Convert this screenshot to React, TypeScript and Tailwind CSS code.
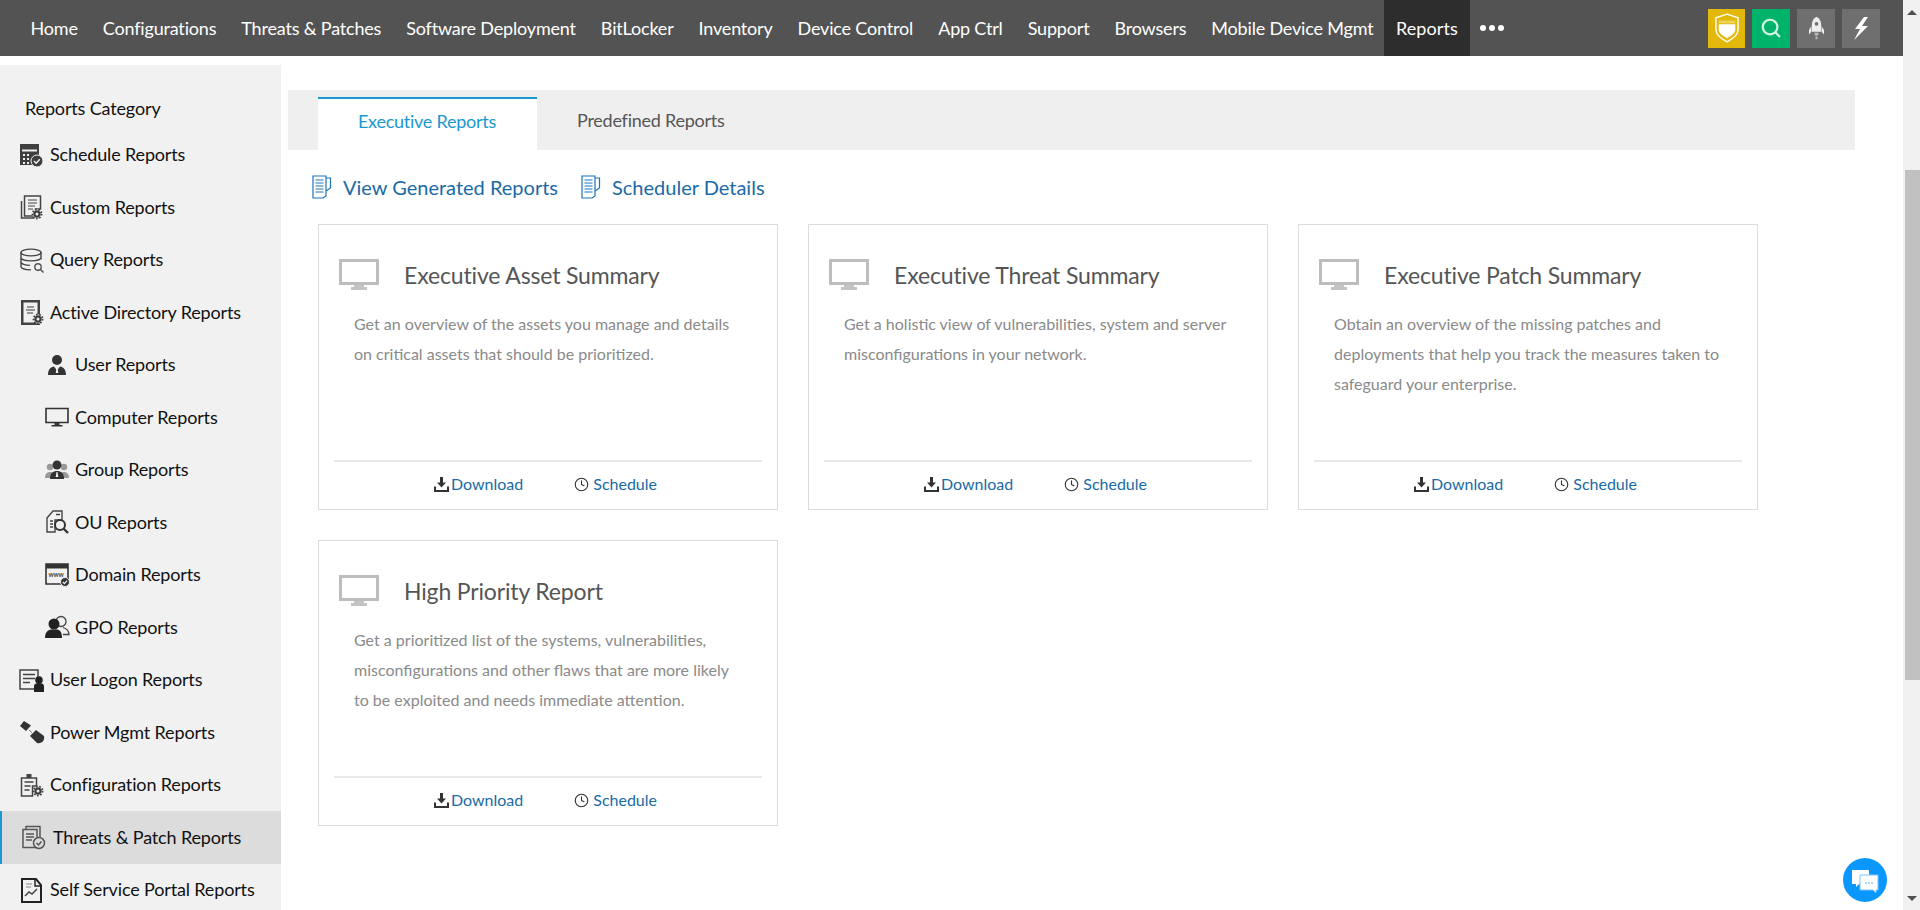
import { ReactNode } from "react";
import { Search, Clock } from "lucide-react";

const navItems = [
  "Home",
  "Configurations",
  "Threats & Patches",
  "Software Deployment",
  "BitLocker",
  "Inventory",
  "Device Control",
  "App Ctrl",
  "Support",
  "Browsers",
  "Mobile Device Mgmt",
];

const Gear = ({ x, y }: { x: number; y: number }) => (
  <g transform={`translate(${x} ${y})`}>
    <circle r="4.2" fill="#3c3c3c" stroke="#f1f1f1" strokeWidth="1" />
    <circle r="4.6" fill="none" stroke="#3c3c3c" strokeWidth="1.6" strokeDasharray="1.6 1.6" />
    <circle r="1.5" fill="#f1f1f1" />
  </g>
);

const icons: Record<string, ReactNode> = {
  schedule: (
    <>
      <path d="M0 1h19v21H0z" fill="#3f3f3f" />
      <path d="M2 6.500h15v2H2z" fill="#f1f1f1" />
      <path d="M3 11h2v2H3zM7 11h2v2H7zM3 15h2v2H3zM7 15h2v2H7zM3 19h2v2H3zM7 19h2v2H7z" fill="#f1f1f1" />
      <circle cx="17" cy="18" r="6" fill="#3f3f3f" stroke="#f1f1f1" strokeWidth="1" />
      <path d="M14 18l2.200 2.200 3.600-4" fill="none" stroke="#f1f1f1" strokeWidth="1.400" />
    </>
  ),
  custom: (
    <>
      <path d="M1.500 6v17h13" fill="none" stroke="#444" strokeWidth="1.500" />
      <path d="M4.500 1h16v13h-5v7h-11z" fill="none" stroke="#444" strokeWidth="1.500" />
      <path d="M8 5h9M8 8h9M8 11h7M8 14h5" stroke="#444" strokeWidth="1.200" />
      <Gear x={17} y={19} />
    </>
  ),
  query: (
    <>
      <ellipse cx="11" cy="4.500" rx="10" ry="3.400" fill="none" stroke="#444" strokeWidth="1.400" />
      <path d="M1 4.500v14c0 1.800 4 3.400 10 3.400M21 4.500v7M1 9.500c0 1.800 4 3.400 10 3.400s10-1.600 10-3.400M1 14c0 1.800 4 3.400 9 3.400" fill="none" stroke="#444" strokeWidth="1.400" />
      <circle cx="18" cy="19" r="3.200" fill="#f1f1f1" stroke="#555" strokeWidth="1.400" />
      <path d="M20.300 21.300l3.200 3.200" stroke="#555" strokeWidth="1.600" />
    </>
  ),
  ad: (
    <>
      <path d="M1 0h19v25H1z" fill="#444" />
      <path d="M3.500 2.500h14v20h-14z" fill="#f1f1f1" />
      <path d="M7 7h7M6 10h9M7 13h6" stroke="#777" strokeWidth="1.300" />
      <Gear x={18} y={19} />
    </>
  ),
  user: (
    <>
      <circle cx="12" cy="7" r="5" fill="#333" />
      <path d="M3 22c0-6 3-8 6-8.500l3 4 3-4c3 .5 6 2.500 6 8.500z" fill="#333" />
      <path d="M11.500 15h1l.8 5h-2.600z" fill="#f1f1f1" />
    </>
  ),
  computer: (
    <>
      <path d="M1 3.500h22v14H1z" fill="none" stroke="#333" strokeWidth="1.600" />
      <path d="M9.500 18h5v2h3v1.500h-11V20h3z" fill="#333" />
    </>
  ),
  group: (
    <>
      <circle cx="5" cy="9" r="3.200" fill="#999" />
      <circle cx="19" cy="9" r="3.200" fill="#999" />
      <path d="M0 20c0-4 2-6 5-6s5 2 5 6zM14 20c0-4 2-6 5-6s5 2 5 6z" fill="#999" />
      <circle cx="12" cy="7" r="4.500" fill="#333" />
      <path d="M5 21c0-6 3-8 7-8s7 2 7 8z" fill="#333" />
      <path d="M11.500 14h1l.8 5h-2.600z" fill="#f1f1f1" />
    </>
  ),
  ou: (
    <>
      <path d="M8 1h9v9H10v12H2V8z" fill="none" stroke="#444" strokeWidth="1.400" />
      <path d="M11 4.500h4M5 11h3M5 14h3M5 17h3" stroke="#444" strokeWidth="1.300" />
      <circle cx="15" cy="15" r="5" fill="#f1f1f1" stroke="#333" strokeWidth="2" />
      <path d="M18.500 18.500l4.500 4.500" stroke="#333" strokeWidth="2.400" />
    </>
  ),
  domain: (
    <>
      <path d="M1 1h22v20H1z" fill="none" stroke="#333" strokeWidth="1.600" />
      <path d="M1 1h22v4.500H1z" fill="#333" />
      <text x="11" y="13.500" textAnchor="middle" fontSize="6.500" fontWeight="700" fill="#444" fontFamily="Lato, sans-serif">www</text>
      <circle cx="20" cy="19" r="4.500" fill="#333" stroke="#f1f1f1" strokeWidth="1" />
      <path d="M17.800 19l1.700 1.700 2.600-3" fill="none" stroke="#f1f1f1" strokeWidth="1.200" />
    </>
  ),
  gpo: (
    <>
      <circle cx="16" cy="6.500" r="5" fill="none" stroke="#444" strokeWidth="1.300" />
      <path d="M18 12.500c3 1 6 3 6 7h-6" fill="none" stroke="#444" strokeWidth="1.300" />
      <circle cx="9" cy="9" r="5.500" fill="#222" />
      <path d="M0 23c0-6 3-8 6-8.500h6c3 .5 5 2.500 5 8.500z" fill="#222" />
    </>
  ),
  logon: (
    <>
      <path d="M0 2h18v19H0z" fill="none" stroke="#444" strokeWidth="1.500" />
      <path d="M3 6.500h12M3 10.500h12M3 14.500h7" stroke="#444" strokeWidth="1.500" />
      <circle cx="19" cy="12" r="3.800" fill="#222" />
      <path d="M14 24v-6c0-2 2-3 5-3s5 1 5 3v6z" fill="#222" />
    </>
  ),
  power: (
    <>
      <path d="M0 6l4-5 7 4.500-5 5.500z" fill="#333" />
      <path d="M10 16l6-6 8 6c1 5-3 8-7 7z" fill="#333" />
      <path d="M9 10l3 2.500" stroke="#777" strokeWidth="1" />
    </>
  ),
  config: (
    <>
      <path d="M1.500 5h15v8h-4v10h-11z" fill="none" stroke="#444" strokeWidth="1.500" />
      <path d="M6.500 5V1h5v4z" fill="#444" />
      <path d="M4.500 9h9M4.500 13h6M4.500 17h5" stroke="#444" strokeWidth="1.300" />
      <Gear x={18} y={18} />
    </>
  ),
  threats: (
    <>
      <path d="M5 4V1.500h14V12" fill="none" stroke="#555" strokeWidth="1.500" />
      <path d="M2 4.500h14v18H2z" fill="#dcdcdc" stroke="#555" strokeWidth="1.500" />
      <path d="M5 9h8M5 12h8M5 15h6" stroke="#555" strokeWidth="1.500" />
      <circle cx="18" cy="18" r="5.500" fill="#dcdcdc" stroke="#555" strokeWidth="1.500" />
      <path d="M15.500 18l2 2 3-3.500" fill="none" stroke="#555" strokeWidth="1.500" />
    </>
  ),
  portal: (
    <>
      <path d="M2 1h14l5 6v17H2z" fill="none" stroke="#222" strokeWidth="2" />
      <path d="M15 1v7h6" fill="none" stroke="#222" strokeWidth="1.500" />
      <path d="M5 18l4-4 3 2 5-5" fill="none" stroke="#444" strokeWidth="1.500" />
      <path d="M6 6h6M6 9h5" stroke="#888" strokeWidth="1.200" />
    </>
  ),
};

const sideItems = [
  { label: "Schedule Reports", icon: "schedule" },
  { label: "Custom Reports", icon: "custom" },
  { label: "Query Reports", icon: "query" },
  { label: "Active Directory Reports", icon: "ad" },
  { label: "User Reports", icon: "user", sub: true },
  { label: "Computer Reports", icon: "computer", sub: true },
  { label: "Group Reports", icon: "group", sub: true },
  { label: "OU Reports", icon: "ou", sub: true },
  { label: "Domain Reports", icon: "domain", sub: true },
  { label: "GPO Reports", icon: "gpo", sub: true },
  { label: "User Logon Reports", icon: "logon" },
  { label: "Power Mgmt Reports", icon: "power" },
  { label: "Configuration Reports", icon: "config" },
  { label: "Threats & Patch Reports", icon: "threats", active: true },
  { label: "Self Service Portal Reports", icon: "portal" },
];

const cards = [
  {
    title: "Executive Asset Summary",
    lines: [
      "Get an overview of the assets you manage and details",
      "on critical assets that should be prioritized.",
    ],
  },
  {
    title: "Executive Threat Summary",
    lines: [
      "Get a holistic view of vulnerabilities, system and server",
      "misconfigurations in your network.",
    ],
  },
  {
    title: "Executive Patch Summary",
    lines: [
      "Obtain an overview of the missing patches and",
      "deployments that help you track the measures taken to",
      "safeguard your enterprise.",
    ],
  },
  {
    title: "High Priority Report",
    lines: [
      "Get a prioritized list of the systems, vulnerabilities,",
      "misconfigurations and other flaws that are more likely",
      "to be exploited and needs immediate attention.",
    ],
  },
];

function DocIcon() {
  return (
    <svg width="20" height="24" viewBox="0 0 20 24" fill="none" stroke="#1b75bb" strokeWidth="1.200">
      <path d="M1 1h13v20l-3 2H1z" />
      <path d="M14 3h4.500v10L14 16" />
      <path d="M3.500 5h8M3.500 8h8M3.500 11h8M3.500 14h8M3.500 17h8" strokeWidth="1" />
    </svg>
  );
}

function DownloadIcon() {
  return (
    <svg width="15" height="15" viewBox="0 0 15 15" fill="#333">
      <path d="M6 0h3v5.500h3L7.500 10.500 3 5.500h3z" />
      <path d="M0 9.500h2V13h11V9.500h2V15H0z" />
    </svg>
  );
}

function Card({ title, lines }: { title: string; lines: string[] }) {
  return (
    <div className="flex h-[286px] w-[460px] flex-col border border-[#dcdcdc] px-[15px]">
      <div className="flex h-[66px] items-end">
        <svg width="40" height="33" viewBox="0 0 40 33" className="mb-[-1px] ml-[5px] shrink-0">
          <path d="M0 0h40v26H0z" fill="#bdbdbd" />
          <path d="M3 3h34v20H3z" fill="#fff" />
          <path d="M15 26h10v2h3v3H12v-3h3z" fill="#c4c4c4" />
        </svg>
        <h3 className="mb-[1px] ml-[25px] text-[23px] leading-[30px] tracking-[-0.15px] text-[#555]">{title}</h3>
      </div>
      <div className="mt-[18px] flex-1 pl-[20px] text-[16px] leading-[30px] text-[#8a8a8a]">
        {lines.map((line) => (
          <p key={line} className="whitespace-nowrap">{line}</p>
        ))}
      </div>
      <div className="flex h-[49px] items-center justify-center gap-[51px] border-t-2 border-[#e8e8e8] pb-[3px] pr-[5px] text-[16px] text-[#1a6aa5]">
        <span className="flex items-center gap-[2px]">
          <DownloadIcon />
          Download
        </span>
        <span className="flex items-center gap-[4px]">
          <Clock size={15} strokeWidth={1.800} className="text-[#333]" />
          Schedule
        </span>
      </div>
    </div>
  );
}

export default function App() {
  return (
    <div className="flex h-screen overflow-hidden bg-white font-['Lato','Liberation_Sans',sans-serif]">
      <div className="flex min-w-0 flex-1 flex-col">
        <header className="flex h-14 shrink-0 items-center bg-[#535353] pl-[18px] pr-[23px] text-[18px] tracking-[-0.18px] text-white">
          {navItems.map((item) => (
            <a key={item} className="flex h-full items-center whitespace-nowrap px-[12.500px]">
              {item}
            </a>
          ))}
          <a className="-ml-[2px] flex h-full items-center bg-[#2d2d2d] px-3 tracking-[0.1px]">Reports</a>
          <div className="ml-[10px] flex gap-[3px]">
            <span className="h-[6px] w-[6px] rounded-full bg-white" />
            <span className="h-[6px] w-[6px] rounded-full bg-white" />
            <span className="h-[6px] w-[6px] rounded-full bg-white" />
          </div>
          <div className="ml-auto flex gap-[7px]">
            <div className="flex h-[39px] w-[37px] items-center justify-center bg-[#e2b80b]">
              <svg width="24" height="30" viewBox="0 0 26 32">
                <path d="M13 1l12 4v13c0 6-6 10-12 13C7 28 1 24 1 18V5z" fill="none" stroke="#fff" strokeWidth="1.500" />
                <path d="M4 8h18v3H4z" fill="#edd25c" />
                <path d="M4 12h18v6c0 4-5 7-9 9-4-2-9-5-9-9z" fill="#fff" />
              </svg>
            </div>
            <div className="flex h-[39px] w-[38px] items-center justify-center bg-[#00b36b]">
              <Search size={22} strokeWidth={2.400} className="text-[#d4f5e6]" />
            </div>
            <div className="flex h-[39px] w-[38px] items-center justify-center bg-[#6f6f6f]">
              <svg width="15" height="24" viewBox="0 0 16 24" fill="#eee">
                <path d="M8 0c3.500 2 5 5 5 9v7H3V9c0-4 1.500-7 5-9z" />
                <path d="M2.500 10v6l-2.500 3v-5zM13.500 10v6l2.500 3v-5z" />
                <path d="M5.500 17h5l-1 3h-3zM7 21h2v3H7z" fill="#bbb" />
                <circle cx="8" cy="7.500" r="2" fill="#6f6f6f" />
              </svg>
            </div>
            <div className="flex h-[39px] w-[38px] items-center justify-center bg-[#6f6f6f]">
              <svg width="16" height="23" viewBox="0 0 16 23" fill="#fff">
                <path d="M11 0L2 12h5L1 23 15 9H9l6-9z" />
              </svg>
            </div>
          </div>
        </header>

        <div className="flex min-h-0 flex-1">
          <aside className="mt-[9px] w-[281px] shrink-0 overflow-hidden bg-[#f1f1f1] text-[18px] tracking-[-0.15px] text-[#111]">
            <div className="flex h-[63.500px] items-end pl-[25px] pb-[6.500px]">Reports Category</div>
            {sideItems.map((item) => (
              <div
                key={item.label}
                className={
                  item.active
                    ? "flex h-[52.500px] items-center border-l-2 border-[#1a98d0] bg-[#dcdcdc] pl-[19px]"
                    : item.sub
                      ? "flex h-[52.500px] items-center pl-[45px]"
                      : "flex h-[52.500px] items-center pl-[20px]"
                }
              >
                <svg width="24" height="24" viewBox="0 0 24 24" className="mr-[6px] shrink-0 overflow-visible">
                  {icons[item.icon]}
                </svg>
                <span className={item.active ? "ml-[2px] whitespace-nowrap" : "whitespace-nowrap"}>{item.label}</span>
              </div>
            ))}
          </aside>

          <main className="min-w-0 flex-1 pl-[7px] pt-[34px]">
            <div className="flex h-[60px] w-[1567px] items-end bg-[#efefef] pl-[30px] text-[18px] tracking-[-0.25px]">
              <div className="flex h-[53px] w-[219px] items-center justify-center border-t-2 border-[#1a98d0] bg-white pb-[6px] pr-[1px] text-[#1a98d0]">
                Executive Reports
              </div>
              <div className="flex h-[53px] items-center pb-[6px] pl-[40px] text-[#555]">Predefined Reports</div>
            </div>

            <div className="mt-[25px] flex h-[24px] items-center pl-[24px] text-[20px] text-[#1a6aa5]">
              <span className="flex items-center gap-[11px]">
                <DocIcon />
                View Generated Reports
              </span>
              <span className="ml-[23px] flex items-center gap-[11px]">
                <DocIcon />
                Scheduler Details
              </span>
            </div>

            <div className="ml-[30px] mt-[25px] grid w-[1440px] grid-cols-[460px_460px_460px] gap-[30px]">
              {cards.map((card) => (
                <Card key={card.title} title={card.title} lines={card.lines} />
              ))}
            </div>
          </main>
        </div>
      </div>

      <div className="flex h-full w-[17px] shrink-0 flex-col bg-[#f1f1f1]">
        <div className="flex h-[24px] items-center justify-center">
          <span className="h-0 w-0 border-x-[5px] border-b-[5px] border-x-transparent border-b-[#505050]" />
        </div>
        <div className="ml-[2px] mt-[146px] h-[510px] w-[15px] bg-[#c1c1c1]" />
        <div className="mt-auto flex h-[24px] items-center justify-center">
          <span className="h-0 w-0 border-x-[5px] border-t-[5px] border-x-transparent border-t-[#505050]" />
        </div>
      </div>

      <div className="absolute left-[1843px] top-[858px] flex h-[44px] w-[44px] items-center justify-center rounded-full bg-[#0a98ff]">
        <svg width="28" height="26" viewBox="0 0 28 26">
          <path d="M1 3h17v14H8l-3 3v-3H1z" fill="#fff" />
          <path d="M9 8h18v15h-2v3l-3-3H9z" fill="#fff" stroke="#7cc4ff" strokeWidth="1" />
          <path d="M14 16h2M17 16h2M20 16h2" stroke="#5aaef5" strokeWidth="1.200" />
        </svg>
      </div>
    </div>
  );
}
